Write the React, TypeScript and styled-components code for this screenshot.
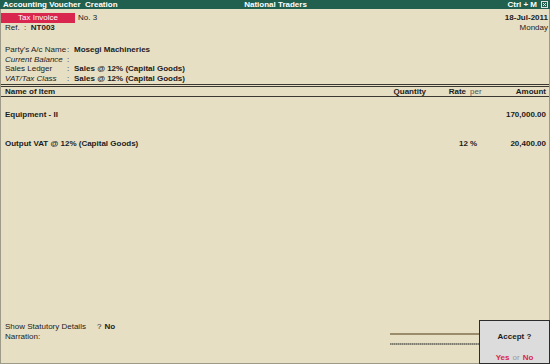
import styled, { createGlobalStyle } from 'styled-components';

const GlobalStyle = createGlobalStyle`
    html, body {
        margin: 0;
        padding: 0;
        background: #e6dfc4;
    }
`;

const Screen = styled.div`
    position: relative;
    width: 550px;
    height: 364px;
    overflow: hidden;
    display: flex;
    flex-direction: column;
    background: #e6dfc4;
    color: #1c1c1c;
    font-family: 'Liberation Sans', Arial, sans-serif;
    font-size: 8px;
    line-height: 10px;
`;

const TitleBar = styled.div`
    height: 9px;
    display: grid;
    grid-template-columns: 1fr auto 1fr;
    align-items: center;
    padding: 0 2px 0 3px;
    background: #21604f;
    color: #fff;
    font-weight: bold;
    line-height: 9px;
    .right {
        display: flex;
        justify-content: flex-end;
        align-items: center;
        gap: 4px;
    }
`;

const Body = styled.div`
    flex: 1;
    display: flex;
    flex-direction: column;
    border: 1px solid #9d9a88;
    border-top: none;
`;

const HeadRow = styled.div<{ $top?: number }>`
    display: flex;
    justify-content: space-between;
    align-items: center;
    height: 10px;
    margin-top: ${(p) => p.$top ?? 0}px;
    padding-right: 1px;
    b {
        font-weight: bold;
    }
`;

const Left = styled.div<{ $indent?: number }>`
    display: flex;
    align-items: center;
    gap: 3px;
    padding-left: ${(p) => p.$indent ?? 0}px;
`;

const Badge = styled.span`
    width: 74px;
    height: 10px;
    background: #d8264e;
    color: #fff;
    text-align: center;
    line-height: 10px;
`;

const Info = styled.div`
    margin-top: 12px;
    padding-left: 4px;
    display: grid;
    grid-template-columns: 62px 7px 1fr;
    grid-auto-rows: 9.5px;
    line-height: 9.5px;
`;

const Label = styled.span<{ $italic?: boolean }>`
    font-style: ${(p) => (p.$italic ? 'italic' : 'normal')};
`;

const Value = styled.span`
    font-weight: bold;
`;

const Cols = styled.div`
    display: grid;
    grid-template-columns: 1fr 60px 40px 22px 56px;
    padding: 0 3px 0 4px;
    align-items: center;
`;

const TableHead = styled(Cols)`
    margin-top: 1px;
    height: 9px;
    line-height: 9px;
    border-top: 3px double #3a3830;
    border-bottom: 1px solid #3a3830;
    font-weight: bold;
`;

const Cell = styled.span<{ $align?: 'left' | 'right'; $light?: boolean; $flush?: boolean }>`
    text-align: ${(p) => p.$align ?? 'left'};
    font-weight: ${(p) => (p.$light ? 'normal' : 'bold')};
    color: ${(p) => (p.$light ? '#555' : 'inherit')};
    padding: ${(p) => (p.$flush ? '0' : p.$align === 'right' ? '0 2px 0 0' : '0 0 0 2px')};
`;

const Items = styled.div`
    display: flex;
    flex-direction: column;
    gap: 19px;
    padding-top: 12.5px;
    flex: 1;
`;

const ItemRow = styled(Cols)`
    height: 10px;
`;

const Footer = styled.div`
    display: flex;
    justify-content: space-between;
    align-items: flex-start;
    padding: 0 69px 18px 4px;
`;

const FooterLabels = styled.div`
    display: grid;
    grid-template-columns: 89px auto auto;
    column-gap: 3px;
    b {
        font-weight: bold;
    }
`;

const Lines = styled.div`
    width: 90px;
    padding-top: 11px;
    display: flex;
    flex-direction: column;
    gap: 8px;
`;

const Rule = styled.div<{ $dotted?: boolean }>`
    height: 2px;
    background: ${(p) =>
        p.$dotted
            ? 'repeating-linear-gradient(90deg, #7f7c70 0 1px, #a9a596 1px 2px)'
            : '#9b8c6b'};
`;

const AcceptBox = styled.div`
    position: absolute;
    right: 0;
    bottom: 0;
    width: 71px;
    height: 44px;
    display: flex;
    flex-direction: column;
    align-items: center;
    justify-content: space-between;
    padding: 11px 0 0;
    box-sizing: border-box;
    background: #dcdcdc;
    border: 1px solid #2c2c2c;
    font-weight: bold;
    color: #1a1a1a;
    .choice {
        color: #d8264e;
    }
    .or {
        color: #9a9a9a;
        font-weight: normal;
        margin: 0 3px;
    }
`;

function CloseIcon() {
    return (
        <svg width="7" height="7" viewBox="0 0 7 7">
            <rect x="0.5" y="0.5" width="6" height="6" fill="#21604f" stroke="#e0e0e0" strokeWidth="1" />
            <path d="M2 2 L5 5 M5 2 L2 5" stroke="#e0e0e0" strokeWidth="1" />
        </svg>
    );
}

export default function App() {
    return (
        <Screen>
            <GlobalStyle />
            <TitleBar>
                <span>Accounting Voucher&nbsp; Creation</span>
                <span>National Traders</span>
                <span className="right">
                    Ctrl + M <CloseIcon />
                </span>
            </TitleBar>
            <Body>
                <HeadRow $top={4}>
                    <Left>
                        <Badge>Tax Invoice</Badge>
                        <span>No. 3</span>
                    </Left>
                    <b>18-Jul-2011</b>
                </HeadRow>
                <HeadRow>
                    <Left $indent={4}>
                        <span>Ref.&nbsp; :&nbsp; <b>NT003</b></span>
                    </Left>
                    <span>Monday</span>
                </HeadRow>

                <Info>
                    <Label>Party's A/c Name</Label>
                    <span>:</span>
                    <Value>Mosegi Machineries</Value>
                    <Label $italic>Current Balance</Label>
                    <span>:</span>
                    <Value />
                    <Label>Sales Ledger</Label>
                    <span>:</span>
                    <Value>Sales @ 12% (Capital Goods)</Value>
                    <Label $italic>VAT/Tax Class</Label>
                    <span>:</span>
                    <Value>Sales @ 12% (Capital Goods)</Value>
                </Info>

                <TableHead>
                    <Cell $flush>Name of Item</Cell>
                    <Cell $align="right">Quantity</Cell>
                    <Cell $align="right">Rate</Cell>
                    <Cell $light>per</Cell>
                    <Cell $align="right" $flush>Amount</Cell>
                </TableHead>

                <Items>
                    <ItemRow>
                        <Cell $flush>Equipment - II</Cell>
                        <Cell />
                        <Cell />
                        <Cell />
                        <Cell $align="right" $flush>170,000.00</Cell>
                    </ItemRow>
                    <ItemRow>
                        <Cell $flush>Output VAT @ 12% (Capital Goods)</Cell>
                        <Cell />
                        <Cell $align="right" $flush>12</Cell>
                        <Cell>%</Cell>
                        <Cell $align="right" $flush>20,400.00</Cell>
                    </ItemRow>
                </Items>

                <Footer>
                    <FooterLabels>
                        <span>Show Statutory Details</span>
                        <span>?</span>
                        <b>No</b>
                        <span>Narration:</span>
                    </FooterLabels>
                    <Lines>
                        <Rule />
                        <Rule $dotted />
                    </Lines>
                </Footer>
            </Body>
            <AcceptBox>
                <span>Accept ?</span>
                <span>
                    <span className="choice">Yes</span>
                    <span className="or">or</span>
                    <span className="choice">No</span>
                </span>
            </AcceptBox>
        </Screen>
    );
}
